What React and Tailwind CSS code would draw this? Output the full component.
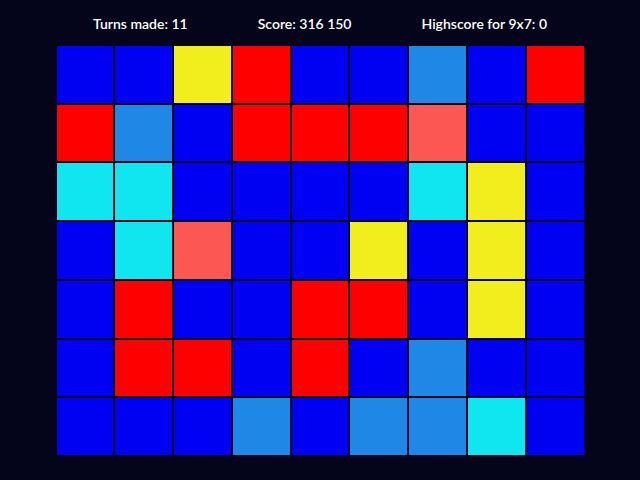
const B = 'bg-[#0000f2]'
const Y = 'bg-[#f2ee1e]'
const R = 'bg-[#fe0000]'
const L = 'bg-[#1f88e6]'
const S = 'bg-[#fd5753]'
const C = 'bg-[#10e6f0]'

const board = [
  [B, B, Y, R, B, B, L, B, R],
  [R, L, B, R, R, R, S, B, B],
  [C, C, B, B, B, B, C, Y, B],
  [B, C, S, B, B, Y, B, Y, B],
  [B, R, B, B, R, R, B, Y, B],
  [B, R, R, B, R, B, L, B, B],
  [B, B, B, L, B, L, L, C, B],
]

export default function App() {
  return (
    <div className="w-[640px] h-[480px] bg-[#04041a] flex flex-col items-center font-['Lato',sans-serif]">
      <div className="h-[46px] flex items-center justify-center gap-[70px] text-white text-[14px] font-semibold pt-[1px]">
        <span>Turns made: 11</span>
        <span>Score: 316 150</span>
        <span>Highscore for 9x7: 0</span>
      </div>
      <div className="grid grid-cols-9 grid-rows-7 gap-[2px] w-[527px] h-[409px]">
        {board.flat().map((color, i) => (
          <div key={i} className={color} />
        ))}
      </div>
    </div>
  )
}
